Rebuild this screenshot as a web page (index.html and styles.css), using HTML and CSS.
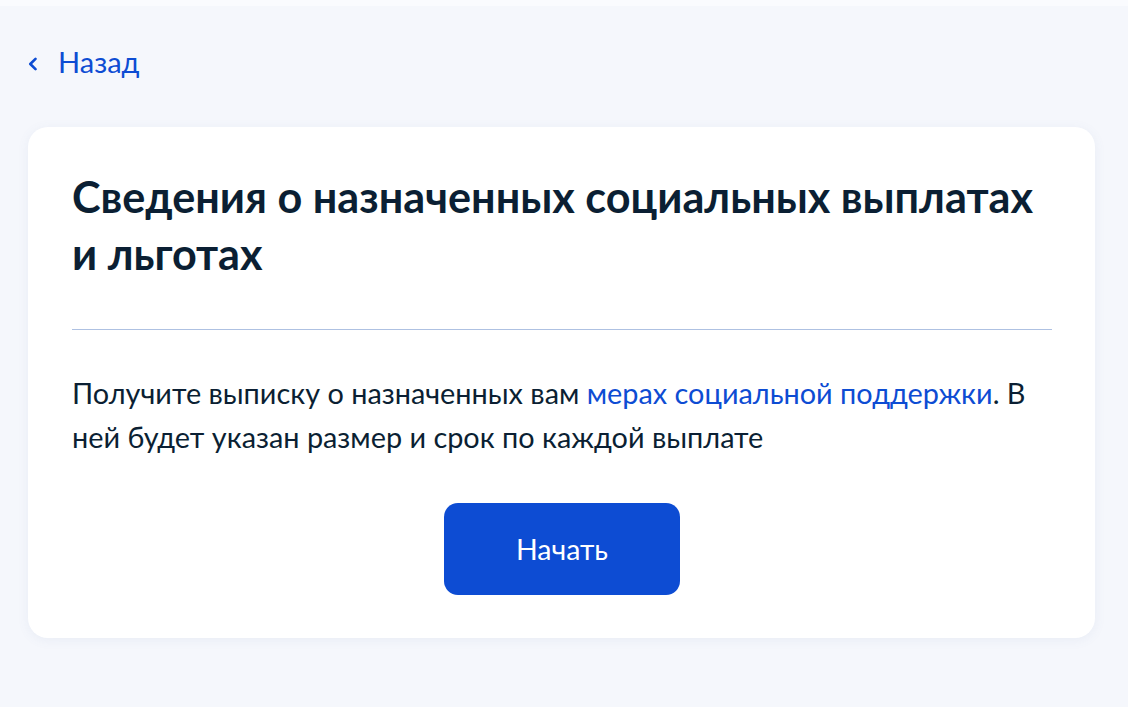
FILE: index.html
```html
<!doctype html>
<html lang="ru">
<head>
    <meta charset="UTF-8">
    <title>Сведения о назначенных социальных выплатах и льготах</title>
    <link rel="stylesheet" href="styles.css">
</head>
<body>
    <div class="page">
        <a class="back" href="#">
            <svg class="back-icon" width="10" height="14" viewBox="0 0 10 14">
                <path d="M7.5 1.8 L2.3 7 L7.5 12.2" fill="none" stroke="currentColor" stroke-width="2.6" stroke-linecap="round" stroke-linejoin="round"/>
            </svg>
            <span>Назад</span>
        </a>

        <div class="card">
            <h1 class="title">Сведения о назначенных социальных выплатах и льготах</h1>
            <hr class="divider">
            <p class="text">Получите выписку о назначенных вам <a href="#">мерах социальной поддержки</a>. В ней будет указан размер и срок по каждой выплате</p>
            <div class="actions">
                <button class="btn" type="button">Начать</button>
            </div>
        </div>
    </div>
</body>
</html>
```

FILE: styles.css
```css
* {
    margin: 0;
    padding: 0;
    box-sizing: border-box;
}

body {
    background: #f5f7fc;
    font-family: Lato, "Noto Sans", sans-serif;
    color: #0b1f33;
    border-top: 6px solid #fafbfe;
}

.page {
    padding: 36px 33px 60px 28px;
}

.back {
    display: inline-flex;
    align-items: center;
    gap: 20px;
    color: #0d4cd3;
    text-decoration: none;
    font-size: 29px;
    line-height: 40px;
}

.back-icon {
    display: block;
    margin-top: 3px;
}

.card {
    margin-top: 45px;
    background: #fff;
    border-radius: 20px;
    box-shadow: 0 2px 12px rgba(86, 113, 170, 0.08);
    padding: 41px 43px 43px 44px;
}

.title {
    font-size: 43.2px;
    font-weight: 700;
    line-height: 57px;
}

.divider {
    border: 0;
    border-top: 1px solid #aec1e2;
    margin: 47px 0 41px;
}

.text {
    font-size: 28.85px;
    line-height: 44px;
}

.text a {
    color: #0d4cd3;
    text-decoration: none;
}

.actions {
    display: flex;
    justify-content: center;
    margin-top: 44px;
}

.btn {
    width: 236px;
    height: 92px;
    border: 0;
    border-radius: 14px;
    background: #0d4cd3;
    color: #fff;
    font-family: inherit;
    font-size: 28.5px;
}
```
